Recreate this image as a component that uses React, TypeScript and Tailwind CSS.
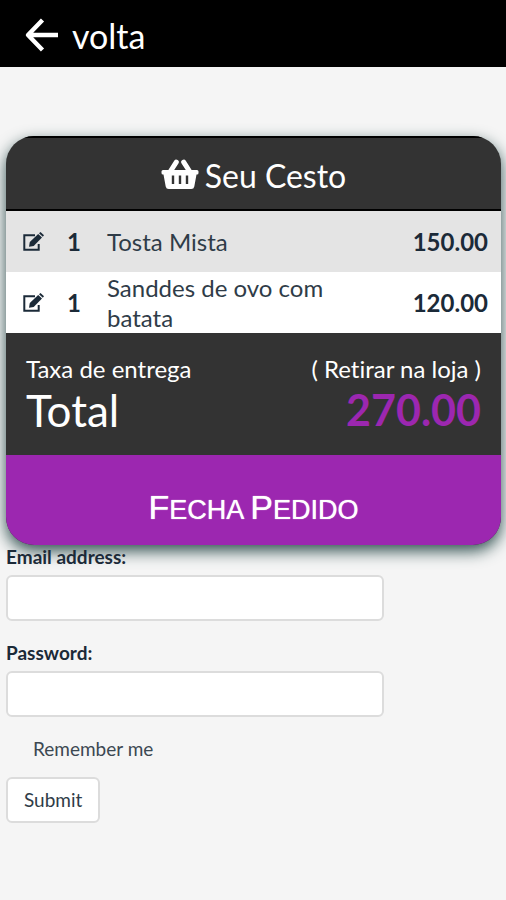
const items = [
  { qty: 1, name: "Tosta Mista", price: "150.00" },
  { qty: 1, name: "Sanddes de ovo com batata", price: "120.00" },
];

function EditIcon() {
  return (
    <svg viewBox="0 0 22 20" className="h-5 w-[22px]" fill="none" aria-hidden="true">
      <path d="M13 3.2H2.3V17.7H16.7V12" stroke="currentColor" strokeWidth="2" />
      <path d="M7 14.8L7.8 10.1L16.2 1.9L20 5.5L11.7 13.9Z" fill="currentColor" />
      <path d="M17 1.2L18.5 0L22 3.3L20.8 4.8Z" fill="currentColor" />
    </svg>
  );
}

function BasketIcon() {
  return (
    <svg viewBox="0 0 38 32" className="h-8 w-[38px]" aria-hidden="true">
      <path d="M15.3 4.2L9 14M22.7 4.2L29 14" stroke="currentColor" strokeWidth="5" strokeLinecap="round" fill="none" />
      <path
        fillRule="evenodd"
        fill="currentColor"
        d="M2 12H36Q37.5 12 37.5 13.5V15Q37.5 16.5 36 16.5H35.5L33.3 28.5Q32.8 31 30.3 31H7.7Q5.2 31 4.7 28.5L2.5 16.5H2Q0.5 16.5 0.5 15V13.5Q0.5 12 2 12ZM10.8 17.5V26H13.2V17.5ZM17.8 17.5V26H20.2V17.5ZM24.8 17.5V26H27.2V17.5Z"
      />
    </svg>
  );
}

const field =
  "block h-[46px] w-full rounded-md border-2 border-[#dcdcdc] bg-white px-3 text-lg outline-none";

export default function App() {
  return (
    <div className="min-h-screen bg-[#f5f5f5] font-['Lato',sans-serif] text-[#1b2a38] [font-variant-ligatures:none]">
      <header className="flex h-[67px] items-center bg-black px-6 pt-1 text-white">
        <button type="button" className="flex items-center gap-3 text-[34px] leading-10">
          <svg viewBox="0 0 36 36" className="size-9" fill="none" stroke="currentColor" strokeWidth="4.4" strokeLinejoin="round" aria-hidden="true">
            <path d="M18.5 2L4 17L18.5 32M4 17H34" />
          </svg>
          volta
        </button>
      </header>

      <main className="pr-[5px] pl-[6px] pt-[69px]">
        <section className="relative overflow-hidden rounded-[28px] bg-[#333333] shadow-[0_6px_16px_#2f4f4f]">
          <h1 className="flex h-[75px] items-center justify-center gap-[6px] border-y-2 border-black text-[32px] leading-10 text-white">
            <BasketIcon />
            <span className="pt-1">Seu Cesto</span>
          </h1>
          <table className="w-full table-fixed text-2xl leading-[30px]">
            <tbody>
              {items.map((item) => (
                <tr key={item.name} className="h-[61px] bg-white odd:bg-[#e4e4e4]">
                  <td className="w-[54px] pl-4">
                    <button type="button" aria-label="Editar" className="flex">
                      <EditIcon />
                    </button>
                  </td>
                  <td className="w-[47px] pl-[7px] font-bold">{item.qty}</td>
                  <td className="pr-10 text-[#2f3c48]">{item.name}</td>
                  <td className="w-[130px] pr-[13px] text-right font-bold">{item.price}</td>
                </tr>
              ))}
            </tbody>
          </table>
          <div className="px-5 pt-5 pb-5 text-white">
            <div className="flex justify-between text-2xl leading-8">
              <span>Taxa de entrega</span>
              <span>( Retirar na loja )</span>
            </div>
            <div className="flex justify-between text-[44px] leading-[50px]">
              <span>Total</span>
              <span className="text-[43px] font-bold text-[#9c27b0]">270.00</span>
            </div>
          </div>
          <button
            type="button"
            aria-label="Fecha Pedido"
            className="block h-[90px] w-full bg-[#9c27b0] pt-[14px] font-['Liberation_Sans',Arial,sans-serif] text-[27px] text-white uppercase [text-shadow:0_0_1px_#ffffff]"
          >
            <span className="text-[34px]">F</span>echa <span className="text-[34px]">P</span>edido
          </button>
        </section>

        <form className="w-[378px] max-w-full text-[19px] leading-6" onSubmit={(e) => e.preventDefault()}>
          <label htmlFor="email" className="relative mb-[6px] block font-bold">Email address:</label>
          <input id="email" type="email" className={field} />
          <label htmlFor="password" className="mt-5 mb-[6px] block font-bold">Password:</label>
          <input id="password" type="password" className={field} />
          <label className="mt-5 flex items-center text-[#3c4852]">
            <input type="checkbox" className="mr-[14px] size-[13px] appearance-none" />
            Remember me
          </label>
          <button type="submit" className="mt-4 h-[46px] rounded-md border-2 border-[#dcdcdc] bg-white px-4 text-[#2f3c48]">
            Submit
          </button>
        </form>
      </main>
    </div>
  );
}
